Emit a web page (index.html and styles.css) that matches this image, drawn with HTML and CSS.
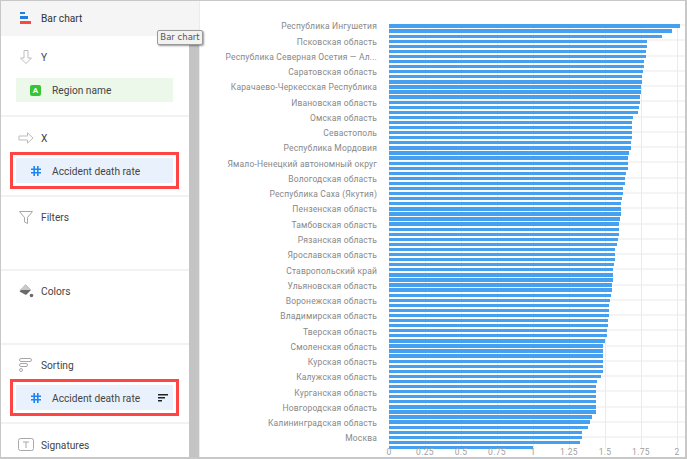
FILE: index.html
```html
<!DOCTYPE html>
<html lang="en">
<head>
    <meta charset="UTF-8">
    <title>Bar chart</title>
    <link rel="stylesheet" href="styles.css">
</head>
<body>
    <div class="frame">
        <div class="sidebar">
            <div class="chart-type">
                <svg class="icon" width="16" height="16" viewBox="0 0 16 16"><rect x="2" y="1" width="5" height="2" fill="#1f7fe0"/><rect x="2" y="5" width="8" height="3" fill="#1f7fe0"/><rect x="2" y="10" width="11" height="3" fill="#ff4444"/></svg>
                <span>Bar chart</span>
            </div>
            <div class="panel">
                <section class="section sec-y">
                    <div class="title">
                        <svg class="icon" width="16" height="16" viewBox="0 0 16 16" fill="none" stroke="#bdbdbd"><path d="M6 1.500h4v7.500h3.500L8 14.500 2.500 9H6z"/></svg>
                        <span>Y</span>
                    </div>
                    <div class="pill green">
                        <span class="badge">A</span>
                        <span>Region name</span>
                    </div>
                </section>
                <section class="section sec-x">
                    <div class="title">
                        <svg class="icon" width="16" height="16" viewBox="0 0 16 16" fill="none" stroke="#bdbdbd"><path d="M1 6h8.500V2.800L15 8l-5.500 5.200V10H1z"/></svg>
                        <span>X</span>
                    </div>
                    <div class="marked">
                        <div class="pill blue">
                            <svg class="hash" width="10" height="10" viewBox="0 0 10 10" stroke="#1f86f0" stroke-width="1.600"><path d="M3.200 0v10M6.800 0v10M0 3.200h10M0 6.800h10"/></svg>
                            <span>Accident death rate</span>
                        </div>
                    </div>
                </section>
                <section class="section sec-filters">
                    <div class="title">
                        <svg class="icon" width="16" height="16" viewBox="0 0 16 16" fill="none" stroke="#a8a8a8"><path d="M1.500 2.500h13L9.500 8.500v6l-3-1.500V8.500z"/></svg>
                        <span>Filters</span>
                    </div>
                </section>
                <section class="section sec-colors">
                    <div class="title">
                        <svg class="icon" width="16" height="16" viewBox="0 0 16 16" fill="#6a6a6a"><path d="M7.500 1.500l5.500 5.500-5 5-6.500-3.500z"/><path d="M7.500 1.500l5.500 5.500H1.500z" fill="#c9c9c9"/><circle cx="13.500" cy="12.500" r="1.800"/></svg>
                        <span>Colors</span>
                    </div>
                </section>
                <section class="section sec-sorting">
                    <div class="title">
                        <svg class="icon" width="16" height="16" viewBox="0 0 16 16" fill="none" stroke="#a8a8a8"><rect x="1.500" y="1.500" width="12" height="3" rx="1.500"/><rect x="1.500" y="6.500" width="8" height="3" rx="1.500"/><rect x="1.500" y="11.500" width="3" height="3" rx="1.500"/></svg>
                        <span>Sorting</span>
                    </div>
                    <div class="marked">
                        <div class="pill blue">
                            <svg class="hash" width="10" height="10" viewBox="0 0 10 10" stroke="#1f86f0" stroke-width="1.600"><path d="M3.200 0v10M6.800 0v10M0 3.200h10M0 6.800h10"/></svg>
                            <span>Accident death rate</span>
                            <svg class="sort" width="10" height="8" viewBox="0 0 10 8" fill="#222"><rect width="10" height="1.500"/><rect y="3" width="7" height="1.500"/><rect y="6" width="4" height="1.500"/></svg>
                        </div>
                    </div>
                </section>
                <section class="section sec-sign">
                    <div class="title">
                        <svg class="icon" width="16" height="16" viewBox="0 0 16 16" fill="none" stroke="#a8a8a8"><rect x="0.500" y="1.500" width="15" height="12" rx="2"/><path d="M5 5h6M8 5v6"/></svg>
                        <span>Signatures</span>
                    </div>
                </section>
            </div>
            <div class="scrollbar"></div>
        </div>

        <div class="main">
            <div class="labels">
                <div>Республика Ингушетия</div>
                <div>Псковская область</div>
                <div>Республика Северная Осетия — Ал...</div>
                <div>Саратовская область</div>
                <div>Карачаево-Черкесская Республика</div>
                <div>Ивановская область</div>
                <div>Омская область</div>
                <div>Севастополь</div>
                <div>Республика Мордовия</div>
                <div>Ямало-Ненецкий автономный округ</div>
                <div>Вологодская область</div>
                <div>Республика Саха (Якутия)</div>
                <div>Пензенская область</div>
                <div>Тамбовская область</div>
                <div>Рязанская область</div>
                <div>Ярославская область</div>
                <div>Ставропольский край</div>
                <div>Ульяновская область</div>
                <div>Воронежская область</div>
                <div>Владимирская область</div>
                <div>Тверская область</div>
                <div>Смоленская область</div>
                <div>Курская область</div>
                <div>Калужская область</div>
                <div>Курганская область</div>
                <div>Новгородская область</div>
                <div>Калининградская область</div>
                <div>Москва</div>
            </div>
            <div class="plot-wrap">
                <div class="plot">
                    <div class="bar" style="width:291.3px"></div>
                    <div class="bar" style="width:282.7px"></div>
                    <div class="bar" style="width:273.3px"></div>
                    <div class="bar" style="width:258px"></div>
                    <div class="bar" style="width:258px"></div>
                    <div class="bar" style="width:257.3px"></div>
                    <div class="bar" style="width:256.7px"></div>
                    <div class="bar" style="width:255px"></div>
                    <div class="bar" style="width:255px"></div>
                    <div class="bar" style="width:253.7px"></div>
                    <div class="bar" style="width:252.7px"></div>
                    <div class="bar" style="width:252.7px"></div>
                    <div class="bar" style="width:251.7px"></div>
                    <div class="bar" style="width:251.7px"></div>
                    <div class="bar" style="width:251px"></div>
                    <div class="bar" style="width:251px"></div>
                    <div class="bar" style="width:249.7px"></div>
                    <div class="bar" style="width:249px"></div>
                    <div class="bar" style="width:244.3px"></div>
                    <div class="bar" style="width:243.3px"></div>
                    <div class="bar" style="width:243.3px"></div>
                    <div class="bar" style="width:242.7px"></div>
                    <div class="bar" style="width:242.7px"></div>
                    <div class="bar" style="width:242px"></div>
                    <div class="bar" style="width:242px"></div>
                    <div class="bar" style="width:240.3px"></div>
                    <div class="bar" style="width:238.7px"></div>
                    <div class="bar" style="width:238.7px"></div>
                    <div class="bar" style="width:238.7px"></div>
                    <div class="bar" style="width:237px"></div>
                    <div class="bar" style="width:236.3px"></div>
                    <div class="bar" style="width:235.7px"></div>
                    <div class="bar" style="width:234.3px"></div>
                    <div class="bar" style="width:234.3px"></div>
                    <div class="bar" style="width:233.3px"></div>
                    <div class="bar" style="width:231.7px"></div>
                    <div class="bar" style="width:231.7px"></div>
                    <div class="bar" style="width:231.7px"></div>
                    <div class="bar" style="width:231px"></div>
                    <div class="bar" style="width:229.7px"></div>
                    <div class="bar" style="width:229.7px"></div>
                    <div class="bar" style="width:229.7px"></div>
                    <div class="bar" style="width:229px"></div>
                    <div class="bar" style="width:227.7px"></div>
                    <div class="bar" style="width:226.3px"></div>
                    <div class="bar" style="width:225.7px"></div>
                    <div class="bar" style="width:225.7px"></div>
                    <div class="bar" style="width:225px"></div>
                    <div class="bar" style="width:224px"></div>
                    <div class="bar" style="width:224px"></div>
                    <div class="bar" style="width:224px"></div>
                    <div class="bar" style="width:223.3px"></div>
                    <div class="bar" style="width:223.3px"></div>
                    <div class="bar" style="width:221.7px"></div>
                    <div class="bar" style="width:221px"></div>
                    <div class="bar" style="width:220.3px"></div>
                    <div class="bar" style="width:220.3px"></div>
                    <div class="bar" style="width:219.7px"></div>
                    <div class="bar" style="width:219.3px"></div>
                    <div class="bar" style="width:218.7px"></div>
                    <div class="bar" style="width:218px"></div>
                    <div class="bar" style="width:217.7px"></div>
                    <div class="bar" style="width:215.7px"></div>
                    <div class="bar" style="width:214.3px"></div>
                    <div class="bar" style="width:214.3px"></div>
                    <div class="bar" style="width:214.3px"></div>
                    <div class="bar" style="width:213.7px"></div>
                    <div class="bar" style="width:213.7px"></div>
                    <div class="bar" style="width:213.7px"></div>
                    <div class="bar" style="width:211.7px"></div>
                    <div class="bar" style="width:208px"></div>
                    <div class="bar" style="width:207.3px"></div>
                    <div class="bar" style="width:207px"></div>
                    <div class="bar" style="width:206.7px"></div>
                    <div class="bar" style="width:206.7px"></div>
                    <div class="bar" style="width:206.7px"></div>
                    <div class="bar" style="width:206.7px"></div>
                    <div class="bar" style="width:202.7px"></div>
                    <div class="bar" style="width:201px"></div>
                    <div class="bar" style="width:199px"></div>
                    <div class="bar" style="width:193.3px"></div>
                    <div class="bar" style="width:192.7px"></div>
                    <div class="bar" style="width:191px"></div>
                    <div class="bar" style="width:144px"></div>
                </div>
                <div class="ticks">
                    <span>0</span>
                    <span>0.25</span>
                    <span>0.5</span>
                    <span>0.75</span>
                    <span>1</span>
                    <span>1.25</span>
                    <span>1.5</span>
                    <span>1.75</span>
                    <span>2</span>
                </div>
            </div>
        </div>

        <div class="tooltip">Bar chart</div>
    </div>
</body>
</html>
```

FILE: styles.css
```css
* {
    box-sizing: border-box;
}
html, body {
    margin: 0;
    height: 100%;
    overflow: hidden;
}
body {
    font-family: "Roboto", "Open Sans", sans-serif;
    background: #fff;
}
.frame {
    position: relative;
    display: flex;
    width: 687px;
    height: 459px;
    border: 1px solid #c8c8c8;
    border-right-width: 2px;
    border-bottom-width: 2px;
    overflow: hidden;
}

/* left column */
.sidebar {
    flex: none;
    width: 198px;
    display: grid;
    grid-template-columns: 188px 10px;
    grid-template-rows: 35px 1fr;
}
.chart-type {
    grid-column: 1 / 3;
    display: flex;
    align-items: center;
    gap: 7px;
    padding-left: 17px;
    background: #f5f5f5;
    font-size: 10.200px;
    color: #333;
}
.panel {
    overflow: hidden;
}
.scrollbar {
    background: #c4c4c4;
}
.section {
    border-bottom: 2px solid #f2f2f2;
}
.sec-y { height: 81px; padding-top: 13px; }
.sec-x { height: 80px; padding-top: 13px; }
.sec-filters { height: 74px; padding-top: 12px; }
.sec-colors { height: 74px; padding-top: 12px; }
.sec-sorting { height: 79px; padding-top: 12px; }
.sec-sign { border-bottom: 0; padding-top: 13px; }
.title {
    display: flex;
    align-items: center;
    gap: 7px;
    height: 16px;
    padding-left: 17px;
    font-size: 10.200px;
    color: #444;
}
.icon {
    flex: none;
}
.sec-y .title {
    margin-bottom: 13px;
}
.sec-sorting .title {
    margin-bottom: 1px;
}
.pill {
    display: flex;
    align-items: center;
    width: 157px;
    height: 24px;
    margin-left: 15px;
    padding: 1px 0 0 14px;
    font-size: 10.200px;
    color: #444;
}
.green {
    background: #ebf8ea;
}
.blue {
    background: #e9f2fc;
}
.marked {
    width: 169px;
    height: 37px;
    margin: 6px 0 0 9px;
    padding: 3px;
    border: 3px solid #ff4444;
}
.marked .pill {
    margin-left: 0;
    height: 25px;
}
.badge {
    width: 11px;
    height: 11px;
    margin-right: 11px;
    border-radius: 2px;
    background: #37c537;
    color: #fff;
    font-size: 8px;
    font-weight: bold;
    line-height: 11px;
    text-align: center;
}
.hash {
    flex: none;
    margin: 0 11px 0 1px;
}
.sort {
    margin-left: auto;
    margin-right: 5px;
}

/* chart */
.main {
    flex: 1;
    display: flex;
    min-width: 0;
    border-left: 1px solid #ececec;
}
.labels {
    flex: none;
    width: 177px;
    padding-top: 18.300px;
    margin-right: 12px;
    font-size: 8.500px;
    letter-spacing: 0.16px;
    color: #888;
    text-align: right;
}
.labels div {
    height: 15.270px;
    line-height: 15.270px;
    white-space: nowrap;
}
.plot-wrap {
    flex: 1;
    padding-top: 23.400px;
}
.plot {
    display: flex;
    flex-direction: column;
    gap: 1.790px;
    background-image:
        repeating-linear-gradient(90deg, #ebebeb 0, #ebebeb 1px, transparent 1px, transparent 36px),
        repeating-linear-gradient(180deg, #f4f4f4 0, #f4f4f4 2px, transparent 2px, transparent 15.270px);
}
.bar {
    height: 3.300px;
    background: #45a0f0;
}
.ticks {
    display: grid;
    grid-template-columns: repeat(9, 36px);
    width: 324px;
    margin: -2px 0 0 -18px;
    font-size: 8.500px;
    letter-spacing: 0.3px;
    color: #a0a0a0;
    text-align: center;
}

/* hover hint over the header */
.tooltip {
    position: absolute;
    left: 156px;
    top: 29px;
    width: 46px;
    height: 15px;
    border: 1px solid #9a9a9a;
    border-radius: 2px;
    background: #f2f2f2;
    box-shadow: 1px 1px 2px rgba(0, 0, 0, 0.4);
    font-family: "DejaVu Sans", sans-serif;
    font-size: 8.500px;
    line-height: 13px;
    color: #555;
    text-align: center;
}
```
